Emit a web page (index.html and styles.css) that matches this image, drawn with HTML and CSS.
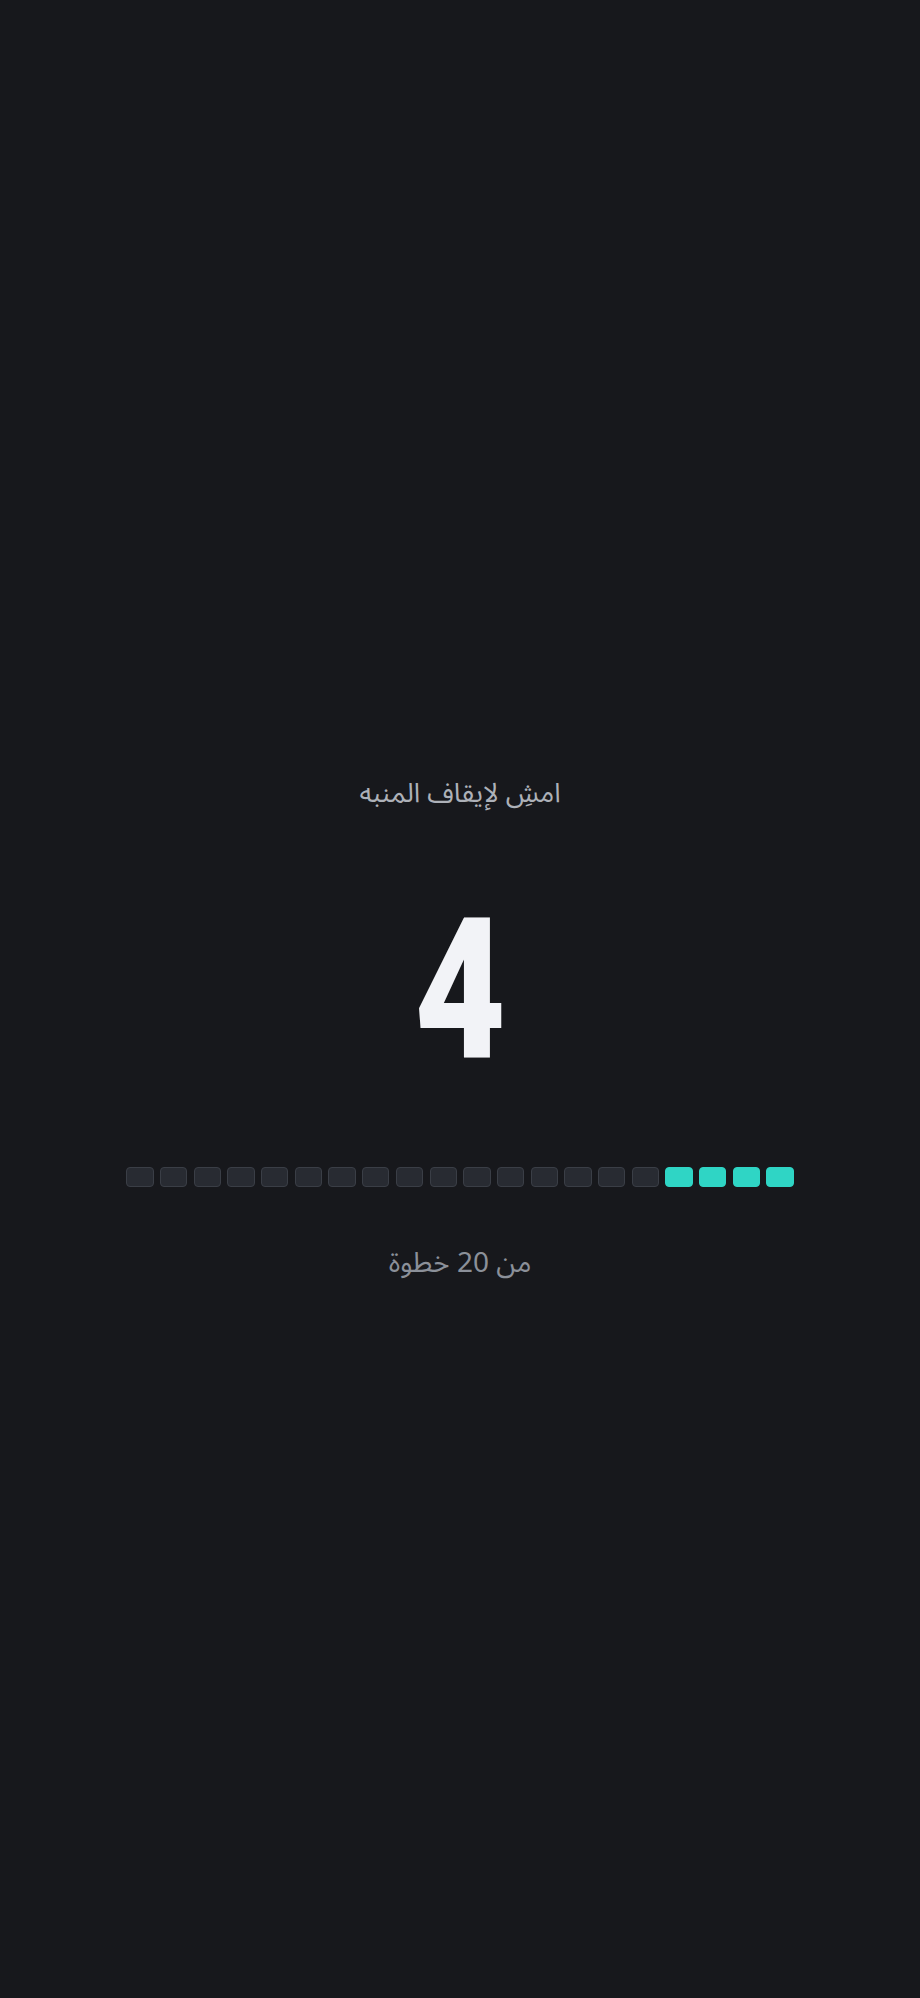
FILE: index.html
```html
<!DOCTYPE html>
<html lang="ar" dir="rtl">
<head>
<meta charset="utf-8">
<title>امشِ لإيقاف المنبه</title>
<link rel="stylesheet" href="styles.css">
</head>
<body>
<main class="screen">
  <h1 class="title">امشِ لإيقاف المنبه</h1>
  <div class="count">4</div>
  <div class="steps">
    <span class="step done"></span><span class="step done"></span><span class="step done"></span><span class="step done"></span>
    <span class="step"></span><span class="step"></span><span class="step"></span><span class="step"></span>
    <span class="step"></span><span class="step"></span><span class="step"></span><span class="step"></span>
    <span class="step"></span><span class="step"></span><span class="step"></span><span class="step"></span>
    <span class="step"></span><span class="step"></span><span class="step"></span><span class="step"></span>
  </div>
  <p class="total">من 20 خطوة</p>
</main>
</body>
</html>
```
FILE: styles.css
```css
html, body {
  margin: 0;
  padding: 0;
  background: #17181c;
}
body {
  min-height: 1998px;
  font-family: "Noto Sans Arabic", "Noto Sans", "DejaVu Sans", sans-serif;
}
.screen {
  display: flex;
  flex-direction: column;
  align-items: center;
  padding-top: 774px;
}
.title {
  margin: 0;
  font-size: 27px;
  line-height: 40px;
  font-weight: 400;
  color: #adb1b8;
}
.count {
  margin-top: 77px;
  height: 200px;
  font-family: Roboto, "Liberation Sans", sans-serif;
  font-weight: 900;
  font-size: 197px;
  line-height: 200px;
  color: #f2f3f7;
  transform: scaleX(0.8);
}
.steps {
  margin-top: 76px;
  display: flex;
  gap: 6.4px;
}
.step {
  width: 27.3px;
  height: 20px;
  box-sizing: border-box;
  border-radius: 4px;
  background: #282b32;
  border: 1px solid #3a3e46;
}
.step.done {
  background: #2fd5c5;
  border-color: #2fd5c5;
}
.total {
  margin: 58px 0 0;
  font-size: 28px;
  line-height: 38px;
  color: #8b9099;
}
```
